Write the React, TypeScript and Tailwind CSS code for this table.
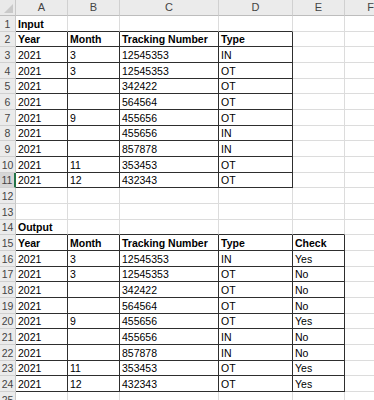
import React from "react";

const inputRows = [
  ["2021", "3", "12545353", "IN"],
  ["2021", "3", "12545353", "OT"],
  ["2021", "", "342422", "OT"],
  ["2021", "", "564564", "OT"],
  ["2021", "9", "455656", "OT"],
  ["2021", "", "455656", "IN"],
  ["2021", "", "857878", "IN"],
  ["2021", "11", "353453", "OT"],
  ["2021", "12", "432343", "OT"],
];

const checks = ["Yes", "No", "No", "No", "Yes", "No", "No", "Yes", "Yes"];

const colLetters = ["A", "B", "C", "D", "E", "F"];
const colWidths = ["w-[52px]", "w-[52px]", "w-[99px]", "w-[74px]", "w-[52px]", "w-[52px]"];
const rowHeights = ["h-[16px]", "h-[15px]", "h-[16px]"];

// build the sheet content: row number -> cell texts
function buildSheet() {
  const sheet: Record<number, { text: string; bold?: boolean }[]> = {};
  sheet[1] = [{ text: "Input", bold: true }];
  sheet[2] = ["Year", "Month", "Tracking Number", "Type"].map((t) => ({ text: t, bold: true }));
  inputRows.forEach((r, i) => {
    sheet[3 + i] = r.map((t) => ({ text: t }));
  });
  sheet[14] = [{ text: "Output", bold: true }];
  sheet[15] = ["Year", "Month", "Tracking Number", "Type", "Check"].map((t) => ({ text: t, bold: true }));
  inputRows.forEach((r, i) => {
    sheet[16 + i] = [...r, checks[i]].map((t) => ({ text: t }));
  });
  return sheet;
}

// which table (if any) a cell belongs to
function inTable(row: number, col: number) {
  if (row >= 2 && row <= 11 && col <= 3) return true;
  if (row >= 15 && row <= 24 && col <= 4) return true;
  return false;
}

function Cell({ row, col, text, bold }: { row: number; col: number; text: string; bold?: boolean }) {
  const dark = inTable(row, col);
  const darkBottom = dark || inTable(row + 1, col);
  return (
    <div
      className={`${colWidths[col]} shrink-0 h-full box-border border-r border-b flex items-center pl-[2px] pt-[1px] overflow-hidden whitespace-nowrap ${
        dark ? "border-r-[#2e2e2e]" : "border-r-[#dcdcdc]"
      } ${darkBottom ? "border-b-[#2e2e2e]" : "border-b-[#dcdcdc]"} ${bold ? "font-bold" : ""}`}
    >
      {text}
    </div>
  );
}

export default function App() {
  const sheet = buildSheet();
  const rows = Array.from({ length: 25 }, (_, i) => i + 1);

  return (
    <div
      className="w-[374px] h-[400px] overflow-hidden bg-white text-black text-[10.5px] leading-none"
      style={{ fontFamily: '"Liberation Sans", Arial, sans-serif' }}
    >
      {/* column headers */}
      <div className="flex h-[16px]">
        <div className="w-[16px] shrink-0 h-full box-border border-r border-b border-r-[#c8c8c8] border-b-[#bdbdbd] bg-[#e9e9e9] relative">
          <div className="absolute right-[2px] bottom-[2px] w-0 h-0 border-l-[9px] border-l-transparent border-b-[9px] border-b-[#c9c9c9]" />
        </div>
        {colLetters.map((l, i) => (
          <div
            key={l}
            className={`${colWidths[i]} shrink-0 h-full box-border border-r border-b border-r-[#d0d0d0] border-b-[#bdbdbd] bg-[#ebebeb] flex items-center justify-center text-[11px] text-[#444]`}
          >
            {l}
          </div>
        ))}
      </div>

      {rows.map((r) => {
        const cells = sheet[r] || [];
        const active = r === 11;
        return (
          <div key={r} className={`flex ${rowHeights[(r - 1) % 3]}`}>
            <div
              className={`w-[16px] shrink-0 h-full box-border border-b flex items-center justify-center pt-[1px] text-[#444] border-b-[#d0d0d0] ${
                active ? "bg-[#d6d6d6] border-r-2 border-r-[#217346]" : "bg-[#ebebeb] border-r border-r-[#c8c8c8]"
              }`}
            >
              {r}
            </div>
            {colLetters.map((_, c) => (
              <Cell key={c} row={r} col={c} text={cells[c]?.text ?? ""} bold={cells[c]?.bold} />
            ))}
          </div>
        );
      })}
    </div>
  );
}
